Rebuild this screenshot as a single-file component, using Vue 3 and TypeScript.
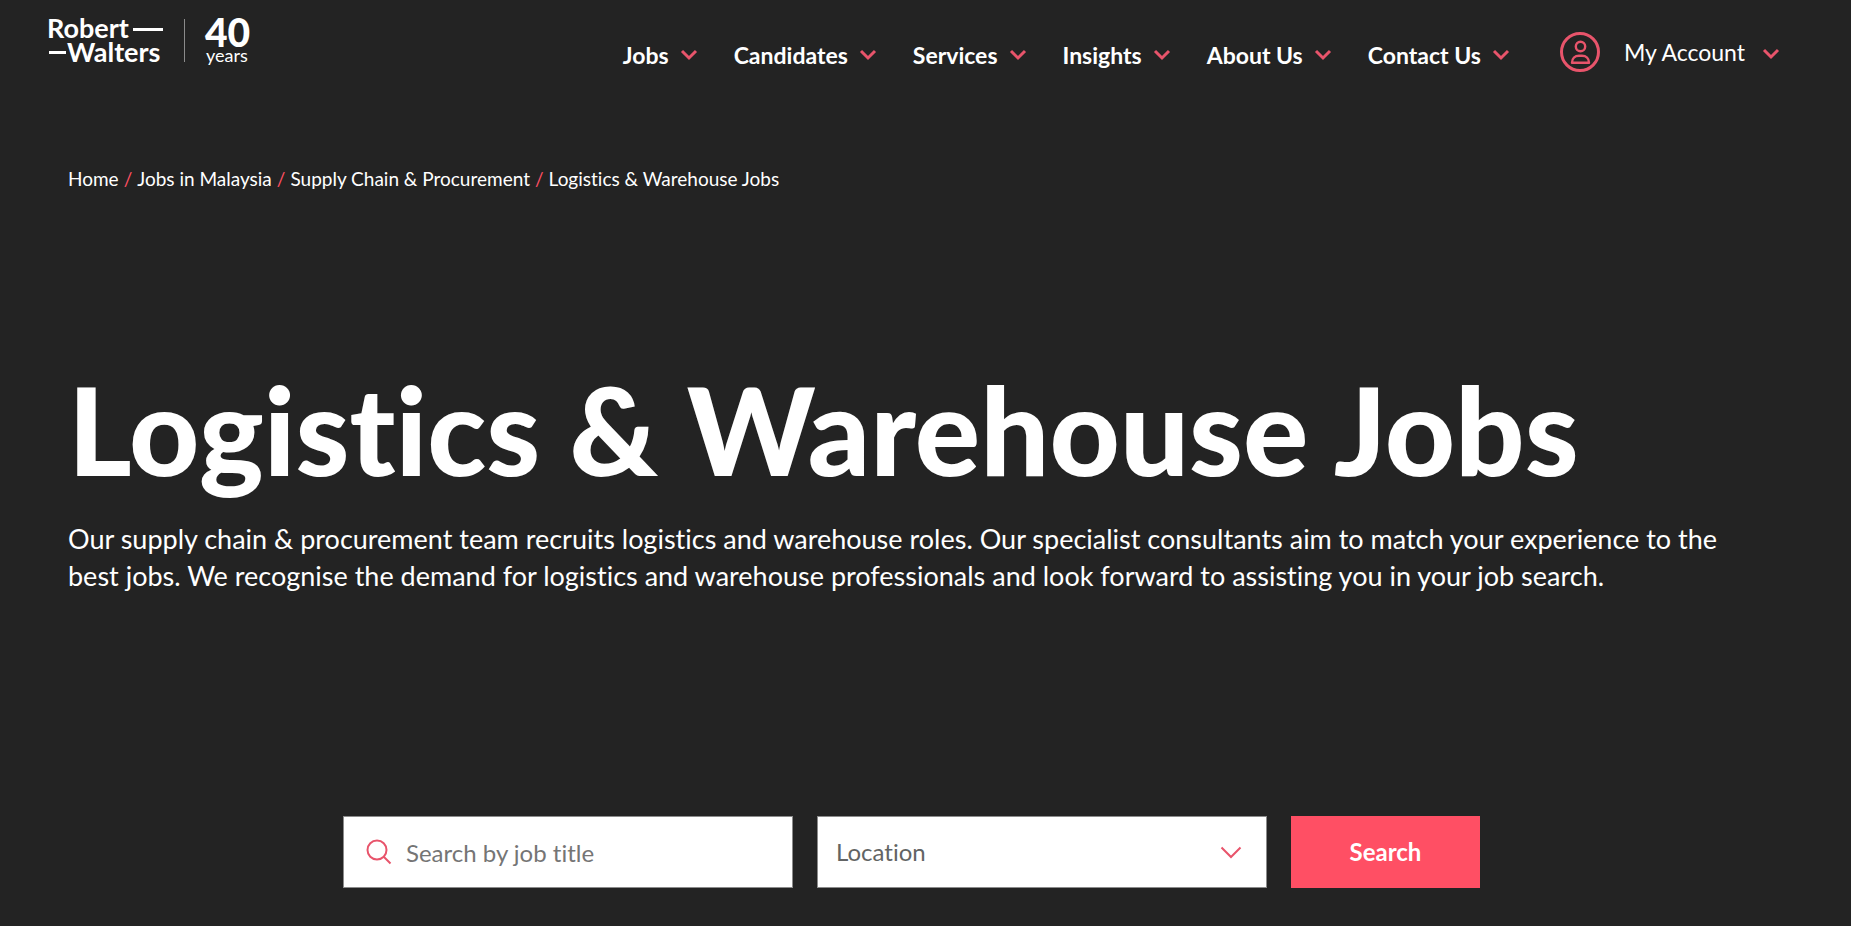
<script setup lang="ts">
import { ref } from 'vue'

interface NavItem { label: string; href: string }

const navItems: NavItem[] = [
  { label: 'Jobs', href: '#jobs' },
  { label: 'Candidates', href: '#candidates' },
  { label: 'Services', href: '#services' },
  { label: 'Insights', href: '#insights' },
  { label: 'About Us', href: '#about' },
  { label: 'Contact Us', href: '#contact' },
]

const crumbs: NavItem[] = [
  { label: 'Home', href: '#home' },
  { label: 'Jobs in Malaysia', href: '#malaysia' },
  { label: 'Supply Chain & Procurement', href: '#supply-chain' },
  { label: 'Logistics & Warehouse Jobs', href: '#logistics' },
]

const title = ref('')
const place = ref('')
</script>

<template>
  <div class="page">
    <header class="header">
      <a class="brand" href="#home" aria-label="Robert Walters, 40 years">
        <svg width="204" height="52" viewBox="0 0 204 52">
          <g fill="#fff">
            <text class="word" x="-1" y="23">Robert</text>
            <rect x="85" y="13" width="30" height="3" />
            <rect x="1" y="36" width="17" height="3" />
            <text class="word" x="19" y="47">Walters</text>
            <rect x="136" y="4" width="1" height="43" fill="#8b8b8b" />
            <text class="forty" x="157" y="32">40</text>
            <text class="years" x="158" y="47">years</text>
          </g>
        </svg>
      </a>
      <nav class="nav" aria-label="Main">
        <a v-for="item in navItems" :key="item.label" class="nav-link" :href="item.href">
          {{ item.label }}
          <svg width="16" height="10" viewBox="0 0 16 10"><path d="M1 1l7 7 7-7" /></svg>
        </a>
      </nav>
      <button class="account" type="button">
        <svg class="avatar" width="40" height="40" viewBox="0 0 40 40">
          <circle cx="20" cy="20" r="18.500" stroke-width="3" />
          <circle cx="20.500" cy="14.500" r="4.700" stroke-width="2.400" />
          <path d="M12 30.700c0-4.200 3-7 7-7h3c4 0 7 2.800 7 7z" stroke-width="2.400" stroke-linejoin="round" />
        </svg>
        My Account
        <svg class="arrow" width="16" height="10" viewBox="0 0 16 10"><path d="M1 1l7 7 7-7" /></svg>
      </button>
    </header>

    <main class="main">
      <nav class="crumbs" aria-label="Breadcrumb">
        <template v-for="(crumb, i) in crumbs" :key="crumb.label">
          <span v-if="i" class="slash">/</span>
          <a :href="crumb.href">{{ crumb.label }}</a>
        </template>
      </nav>

      <h1>Logistics &amp; Warehouse Jobs</h1>
      <p class="intro">
        Our supply chain &amp; procurement team recruits logistics and warehouse roles. Our specialist consultants aim to match your experience to the best jobs. We recognise the demand for logistics and warehouse professionals and look forward to assisting you in your job search.
      </p>

      <form class="search" @submit.prevent>
        <div class="field">
          <svg class="lens" width="26" height="26" viewBox="0 0 26 26">
            <circle cx="11" cy="11" r="9.500" /><path d="M17.500 17.500l7 7" />
          </svg>
          <input v-model="title" type="text" placeholder="Search by job title" aria-label="Search by job title" />
        </div>
        <div class="field">
          <select v-model="place" aria-label="Location">
            <option value="">Location</option>
          </select>
          <svg class="drop" width="22" height="13" viewBox="0 0 22 13"><path d="M1.500 1.500l9.500 9.500 9.500-9.500" /></svg>
        </div>
        <button class="submit" type="submit">Search</button>
      </form>
    </main>
  </div>
</template>

<style>
body {
  margin: 0;
  background: #232323;
}
</style>

<style scoped>
.page {
  min-height: 100vh;
  background: #232323;
  color: #fff;
  font-family: Lato, "Open Sans", sans-serif;
  font-variant-ligatures: none;
}

a {
  color: inherit;
  text-decoration: none;
}

svg {
  flex: none;
  fill: none;
  overflow: visible;
}

.header {
  display: flex;
  align-items: flex-start;
  padding: 15px 72px 0 48px;
}

.brand svg {
  display: block;
}

.word {
  font-size: 27px;
  font-weight: 700;
}

.forty {
  font-size: 39px;
  font-weight: 900;
}

.years {
  font-size: 18px;
}

.nav {
  display: flex;
  gap: 37px;
  margin: 25px 51px 0 auto;
}

.nav-link {
  display: flex;
  align-items: center;
  gap: 12px;
  font-size: 23px;
  font-weight: 700;
  line-height: 30px;
}

.nav-link svg,
.arrow {
  stroke: #e8546b;
  stroke-width: 3;
}

.account {
  display: flex;
  align-items: center;
  margin-top: 17px;
  padding: 0;
  border: 0;
  background: none;
  color: inherit;
  font: 23px/30px Lato, "Open Sans", sans-serif;
}

.avatar {
  margin-right: 24px;
  stroke: #e8546b;
}

.arrow {
  margin: 4px 0 0 18px;
}

.main {
  padding: 0 96px 38px 68px;
}

.crumbs {
  display: flex;
  gap: 5px;
  margin-top: 95px;
  font-size: 19px;
  line-height: 24px;
}

.slash {
  color: #ff4f64;
}

h1 {
  margin: 163px 0 0;
  font-size: 122px;
  font-weight: 900;
  line-height: 150px;
}

.intro {
  margin: 16px 0 0;
  font-size: 27px;
  line-height: 37px;
}

.search {
  display: flex;
  justify-content: center;
  gap: 24px;
  margin-top: 222px;
}

.field {
  position: relative;
  box-sizing: border-box;
  display: flex;
  align-items: center;
  width: 450px;
  height: 72px;
  border: 1px solid #8b8b8b;
  background: #fff;
}

.lens {
  margin: 0 14px 0 22px;
  stroke: #e8546b;
  stroke-width: 2;
}

input,
select {
  flex: 1;
  min-width: 0;
  height: 100%;
  padding: 0;
  border: 0;
  outline: 0;
  background: none;
  color: #626464;
  font: 24px/30px Lato, "Open Sans", sans-serif;
  font-variant-ligatures: none;
}

input::placeholder {
  color: #757575;
  opacity: 1;
}

select {
  appearance: none;
  padding-left: 18px;
}

.drop {
  position: absolute;
  right: 24px;
  stroke: #e8546b;
  stroke-width: 2;
  pointer-events: none;
}

.submit {
  width: 189px;
  padding: 0;
  border: 0;
  background: #ff4f64;
  color: #fff;
  font: 700 24px/30px Lato, "Open Sans", sans-serif;
}
</style>
